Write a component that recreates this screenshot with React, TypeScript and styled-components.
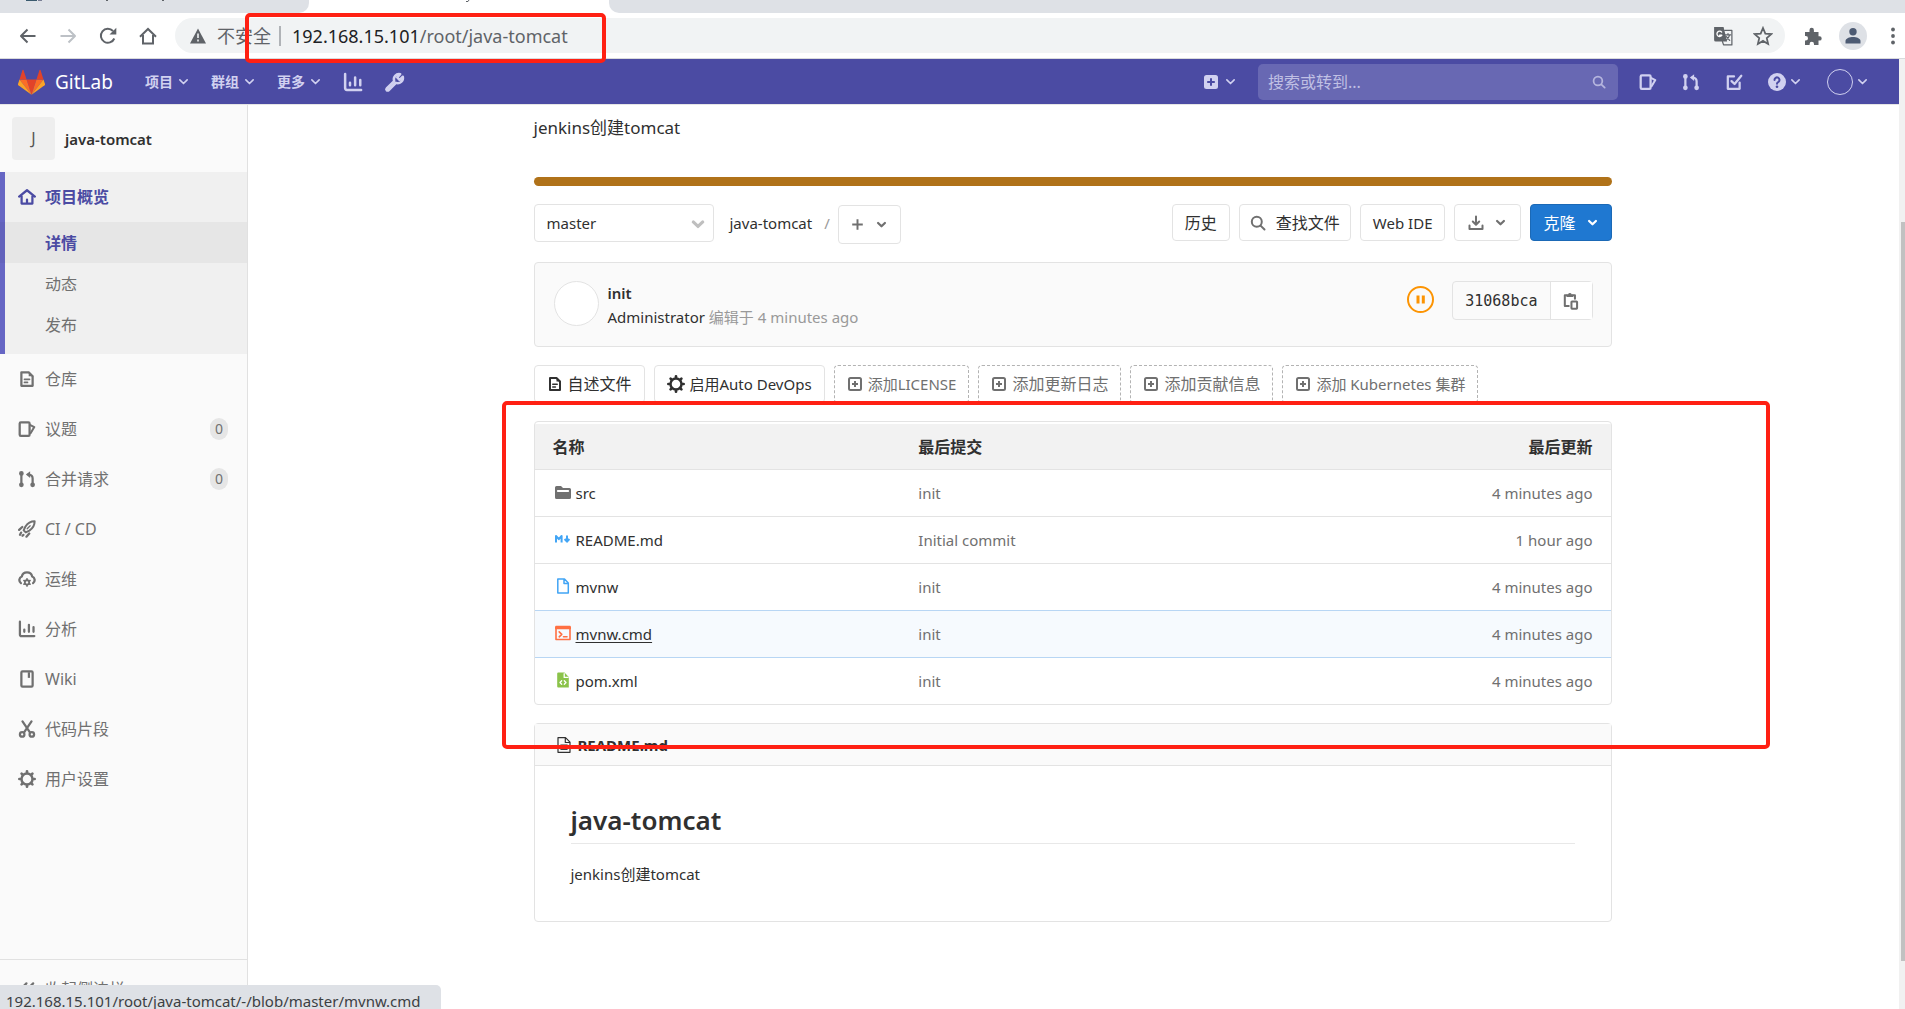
import React from "react";
import styled, { createGlobalStyle, css } from "styled-components";

const Global = createGlobalStyle`
  *, *::before, *::after { box-sizing: border-box; }
  body {
    margin: 0;
    background: #fff;
    color: #303030;
    font-family: "Noto Sans", "Noto Sans CJK SC", sans-serif;
    font-size: 15px;
    line-height: 24px;
  }
  a { color: inherit; text-decoration: none; }
  button, input, select { font: inherit; color: inherit; margin: 0; }
  button { cursor: pointer; }
  h1, p, ul { margin: 0; padding: 0; }
  ul { list-style: none; }
`;

/* ---------- icons ---------- */

const Svg = styled.svg`
  flex: none;
  display: block;
  fill: none;
  stroke: currentColor;
  stroke-width: 2;
  stroke-linecap: round;
  stroke-linejoin: round;
`;

const shapes: Record<string, React.ReactNode> = {
  home: <path d="M1 7.600 8 2l7 5.600M3.200 7v6.800h9.600V7M8 13.500V10.300" />,
  doc: (
    <>
      <path d="M3 2h6.500L13 5.500V14H3z" />
      <path d="M9.500 1.500v4H14z" fill="currentColor" stroke="none" />
      <path d="M5.800 8.300h4.400M5.800 11h2.600" strokeWidth="1.600" />
    </>
  ),
  issues: (
    <>
      <rect x="1.500" y="2" width="8.800" height="12" rx="1" />
      <path d="M11 4.500 14.500 6.300 11.300 11.600" strokeWidth="1.800" />
    </>
  ),
  merge: (
    <>
      <path d="M3 3.500v9.500M13 13V7.500Q13 4.500 9.500 4" />
      <path d="M10.800 1v6L7 4z" fill="currentColor" stroke="none" />
      <circle cx="3" cy="3" r="1.100" fill="currentColor" />
      <circle cx="3" cy="13.200" r="1.100" fill="currentColor" />
      <circle cx="13" cy="13.200" r="1.100" fill="currentColor" />
    </>
  ),
  rocket: (
    <>
      <path d="M14.800 1.200c-3.500 0-6.200 1.600-8.300 4.800L5 9.200 6.900 11l3.200-1.500c3.200-2.100 4.700-4.800 4.700-8.300z" strokeWidth="1.800" />
      <path d="M10.800 5.200 8.200 7.800" strokeWidth="1.200" />
      <path d="M3.800 6.200 1 8.800M10 12 7.500 14.800M2.800 11.200l-1 2M4.800 13.200l-.8.800" />
    </>
  ),
  cloud: (
    <>
      <path d="M2.600 11.600A3.300 3.300 0 0 1 3.400 5.800a4.700 4.700 0 0 1 9.200 0 3.300 3.300 0 0 1 .8 5.800" />
      <circle cx="8" cy="11" r="1.900" strokeWidth="1.600" />
      <path d="M8 7.800v.800M8 13.400v.800M5.300 9.400l.6.400M10.100 12.200l.6.400M5.300 12.600l.6-.4M10.100 9.800l.6-.4" strokeWidth="1.500" />
    </>
  ),
  chart: (
    <path d="M1.700 1.500v11.300q0 1.500 1.500 1.500H14.500M5.600 8.500v2M9.700 4.300v6.200M13.800 6.300v4.200" />
  ),
  book: (
    <>
      <rect x="3" y="1.200" width="10" height="13.600" rx="1" />
      <path d="M9.700 2v5" strokeLinecap="butt" />
    </>
  ),
  scissors: (
    <>
      <path d="M4 1.200 10.600 11M12 1.200 5.400 11" />
      <circle cx="3.700" cy="12.800" r="2" />
      <circle cx="12.300" cy="12.800" r="2" />
    </>
  ),
  gear: (
    <>
      <circle cx="8" cy="8" r="4.900" strokeWidth="2.200" />
      <path d="M8 1.200v1.300M8 13.500v1.300M1.200 8h1.300M13.500 8h1.300M3.200 3.200l.8.800M12 12l.8.800M3.200 12.800l.8-.8M12 4l.8-.8" strokeWidth="2.400" />
    </>
  ),
  collapse: <path d="M7.500 3 2.500 8l5 5M13.500 3l-5 5 5 5" />,
  wrench: (
    <path
      d="M13.700 4.200 11.300 6.400 9.600 4.700 11.800 2.300A3.800 3.800 0 0 0 7.400 7.300L2 12.700a.9.9 0 0 0 1.300 1.300L8.700 8.600A3.800 3.800 0 0 0 13.700 4.200z"
      strokeWidth="1.800"
    />
  ),
  chevron: <path d="M3.500 6 8 10.500 12.500 6" />,
  caret: <path d="M3.800 6.200 8 10.200 12.200 6.200" strokeWidth="2.800" />,
  plus: <path d="M8 1.500v13M1.500 8h13" strokeWidth="2.400" strokeLinecap="butt" />,
  plusBox: (
    <>
      <rect x="2" y="2" width="12" height="12" rx="1.500" />
      <path d="M8 5v6M5 8h6" strokeLinecap="butt" />
    </>
  ),
  plusSolid: (
    <>
      <rect x="1" y="1" width="14" height="14" rx="2.500" fill="currentColor" stroke="none" />
      <path d="M8 4.200v7.600M4.200 8h7.600" stroke="#4b4ba3" strokeLinecap="butt" />
    </>
  ),
  search: (
    <>
      <circle cx="6.800" cy="6.800" r="5" />
      <path d="M10.600 10.600 14.500 14.500" />
    </>
  ),
  todo: (
    <>
      <path d="M13 8.500V14H2.500V3H8" />
      <path d="M5.800 7.200 8.500 9.800 14.500 2.500" />
    </>
  ),
  help: (
    <>
      <circle cx="8" cy="8" r="8" fill="currentColor" stroke="none" />
      <path d="M5.800 6.200a2.200 2.200 0 1 1 3.500 1.700Q8 8.600 8 9.500" stroke="#4b4ba3" strokeWidth="1.800" />
      <circle cx="8" cy="12.200" r="1.200" fill="#4b4ba3" stroke="none" />
    </>
  ),
  download: <path d="M8 1.500v8M4.800 6.500 8 9.700l3.200-3.200M1.500 10.500V14h13v-3.500" />,
  paste: (
    <>
      <path d="M6 12.500H2.500V2.800H4M10 2.800h1.500V6" strokeWidth="1.800" />
      <path d="M4 4.500V2h1.400a1.700 1.700 0 0 1 3.200 0H10v2.500z" fill="currentColor" stroke="none" />
      <rect x="8.400" y="8.400" width="5" height="6.400" rx=".5" strokeWidth="1.800" />
    </>
  ),
  folder: (
    <>
      <path d="M0 3.500A1.500 1.500 0 0 1 1.500 2H6l2 2h6.500A1.500 1.500 0 0 1 16 5.500v8a1.500 1.500 0 0 1-1.500 1.500h-13A1.500 1.500 0 0 1 0 13.500z" fill="currentColor" stroke="none" />
      <path d="M2.800 7h10.400" stroke="#fff" strokeWidth="1.800" />
    </>
  ),
  markdown: (
    <>
      <path d="M1 11.500V5l2.800 3.200L6.600 5v6.500" strokeWidth="2" strokeLinecap="butt" />
      <path d="M12 4.500v5M9.600 8l2.400 2.700L14.400 8" strokeLinecap="butt" />
    </>
  ),
  file: <path d="M2.800 1h6.700l3.800 3.900V15H2.800zM9 1v4.500h4.300" strokeWidth="1.500" />,
  terminal: (
    <>
      <rect x="1" y="1.500" width="14" height="13" strokeWidth="1.600" />
      <path d="M1 3h14" strokeWidth="2.400" />
      <path d="M4.200 6.800 6.800 9.300 4.200 11.800M8.500 11.800h3.500" strokeWidth="1.600" />
    </>
  ),
  xml: (
    <>
      <path d="M3.200.5h6.300L13.800 5v10.500H3.200A1 1 0 0 1 2.200 14.500v-13a1 1 0 0 1 1-1z" fill="currentColor" stroke="none" />
      <path d="M9.200 1.700V5.400h3.800" stroke="#fff" strokeWidth="1.300" />
      <path d="M6.700 8.700 5 10.500l1.700 1.800M9.300 8.700 11 10.500l-1.700 1.800" stroke="#fff" strokeWidth="1.300" />
    </>
  ),
  textFile: (
    <>
      <path d="M2 .7h7.500L14 5.200v10.100H2zM9.300.7v4.800H14" strokeWidth="1.200" />
      <path d="M4.800 8h6.400M4.800 10.200h6.400M4.800 12.400h6.400" strokeWidth="1" />
    </>
  ),
};

const Icon = ({ name, size = 16 }: { name: string; size?: number }) => (
  <Svg viewBox="0 0 16 16" width={size} height={size} aria-hidden="true">
    {shapes[name]}
  </Svg>
);

/* ---------- browser chrome ---------- */

const Page = styled.div`
  height: 100vh;
  overflow: hidden;
  display: flex;
  flex-direction: column;
  position: relative;
`;

const Browser = styled.header`
  flex: none;
  position: relative;
  border-bottom: 1px solid #d9dadc;
`;

const TabStrip = styled.div`
  display: flex;
  height: 13px;
  background: #fff;
`;

const Tab = styled.div<{ $width?: number; $active?: boolean; $side?: "left" | "right" }>`
  ${(p) => (p.$width ? `width: ${p.$width}px;` : "flex: 1;")}
  padding-left: 26px;
  background: ${(p) => (p.$active ? "#fff" : "#dee1e6")};
  border-bottom-right-radius: ${(p) => (p.$side === "left" ? 10 : 0)}px;
  border-bottom-left-radius: ${(p) => (p.$side === "right" ? 10 : 0)}px;
  svg { display: block; }
`;

const Toolbar = styled.div`
  display: flex;
  align-items: center;
  height: 45px;
  padding: 0 3px 0 18px;
  color: #5f6368;
`;

const ChromeButton = styled.button<{ $dim?: boolean }>`
  display: flex;
  justify-content: center;
  width: 20px;
  margin-right: 20px;
  padding: 0;
  border: 0;
  background: none;
  color: ${(p) => (p.$dim ? "#bdc1c6" : "#5f6368")};
`;

const Address = styled.div`
  flex: 1;
  display: flex;
  align-items: center;
  height: 35px;
  margin-left: -3px;
  padding: 0 12px 0 14px;
  border-radius: 18px;
  background: #f1f3f4;
  font-size: 18px;
`;

const Insecure = styled.span`
  padding: 0 8px 0 10px;
  border-right: 2px solid #b0b3b7;
  line-height: 20px;
`;

const Url = styled.span`
  flex: 1;
  padding-left: 11px;
  b { font-weight: 400; color: #202124; }
`;

const AddressTools = styled.div`
  display: flex;
  gap: 20px;
`;

const ChromeTools = styled.div`
  display: flex;
  align-items: center;
  gap: 17px;
  padding-left: 19px;
`;

const Profile = styled.div`
  display: flex;
  justify-content: center;
  align-items: center;
  width: 28px;
  height: 28px;
  border-radius: 50%;
  background: #dee1e6;
`;

const Highlight = styled.div`
  position: absolute;
  border: 4px solid #ff2013;
  border-radius: 5px;
  pointer-events: none;
`;

const UrlHighlight = styled(Highlight)`
  left: 245px;
  top: 13px;
  width: 361px;
  height: 50px;
  z-index: 2;
`;

const FilesHighlight = styled(Highlight)`
  left: -32px;
  right: -158px;
  top: -20px;
  bottom: -44px;
`;

const ChromeGlyph = ({ children, size = 18 }: { children: React.ReactNode; size?: number }) => (
  <Svg viewBox="0 0 18 18" width={size} height={size} aria-hidden="true">
    {children}
  </Svg>
);

const BrowserChrome = () => (
  <Browser>
    <TabStrip>
      <Tab $width={309} $side="left">
        <svg width="145" height="2" aria-hidden="true">
          <path d="M0 0h11v1H0z" fill="#3a5a6e" />
          <path d="M12 0h4v1h-4z" fill="#7a7f95" />
          <path d="M80 0h2v1h-2zM136 0h2v1h-2z" fill="#5f6368" />
        </svg>
      </Tab>
      <Tab $width={300} $active>
        <svg width="140" height="3" aria-hidden="true">
          <path d="M131 1.500h2l1-1.500" stroke="#5f6368" fill="none" />
        </svg>
      </Tab>
      <Tab $side="right" />
    </TabStrip>
    <Toolbar>
      <ChromeButton aria-label="后退">
        <ChromeGlyph><path d="M16.500 9H2M8.500 2.500 2 9l6.500 6.500" strokeLinecap="butt" /></ChromeGlyph>
      </ChromeButton>
      <ChromeButton $dim aria-label="前进">
        <ChromeGlyph><path d="M1.500 9H16M9.500 2.500 16 9l-6.500 6.500" strokeLinecap="butt" /></ChromeGlyph>
      </ChromeButton>
      <ChromeButton aria-label="重新加载">
        <ChromeGlyph>
          <path d="M15.300 11.500A7 7 0 1 1 14 4" strokeLinecap="butt" />
          <path d="M17.300.8v6.800h-6.800z" fill="currentColor" stroke="none" />
        </ChromeGlyph>
      </ChromeButton>
      <ChromeButton aria-label="主页">
        <ChromeGlyph><path d="M1 9.800 9 2l8 7.800M4 8v8.500h10V8" strokeLinecap="butt" strokeLinejoin="miter" /></ChromeGlyph>
      </ChromeButton>
      <Address>
        <ChromeGlyph>
          <path d="M9 1.500 17 16.500H1z" fill="currentColor" stroke="none" />
          <path d="M9 6.500v4.500M9 12.500v2" stroke="#f1f3f4" strokeWidth="1.600" strokeLinecap="butt" />
        </ChromeGlyph>
        <Insecure>不安全</Insecure>
        <Url><b>192.168.15.101</b>/root/java-tomcat</Url>
        <AddressTools>
          <ChromeGlyph size={20}>
            <path d="M1 1h8.500l3.200 13H2.500A1.500 1.500 0 0 1 1 12.500z" fill="currentColor" stroke="none" />
            <path d="M10.500 4H17v13H9.500l-1-3" strokeWidth="1.100" />
            <path d="M7.800 5.500A2.400 2.400 0 1 0 8 8.300H6" stroke="#fff" strokeWidth="1.200" />
            <path d="M11 8h5M13.500 6.800V8M15 8q-.8 3-3 4.500M12 9.500l3 3.500" strokeWidth="1.100" />
          </ChromeGlyph>
          <ChromeGlyph size={20}>
            <path d="m9 1.800 2.100 5 5.400.500-4.100 3.600 1.200 5.300L9 13.400l-4.600 2.800 1.200-5.300L1.500 7.300l5.400-.5z" strokeWidth="1.600" strokeLinejoin="miter" />
          </ChromeGlyph>
        </AddressTools>
      </Address>
      <ChromeTools>
        <ChromeGlyph>
          <path d="M1 5h4.500V3a2.200 2.200 0 0 1 4.400 0v2h4.600v4.200h1a2.200 2.200 0 0 1 0 4.400h-1V18H10v-1a2.200 2.200 0 0 0-4.400 0v1H1v-4.500h.8a2.200 2.200 0 0 0 0-4.400H1z" fill="currentColor" stroke="none" />
        </ChromeGlyph>
        <Profile>
          <ChromeGlyph>
            <circle cx="9" cy="4.800" r="3.700" fill="#4d5b73" stroke="none" />
            <path d="M1.500 16.500V14c0-2.500 4-4 7.500-4s7.500 1.500 7.500 4v2.500z" fill="#4d5b73" stroke="none" />
          </ChromeGlyph>
        </Profile>
        <ChromeGlyph>
          <g fill="currentColor" stroke="none">
            <circle cx="9" cy="2.500" r="1.900" /><circle cx="9" cy="9" r="1.900" /><circle cx="9" cy="15.500" r="1.900" />
          </g>
        </ChromeGlyph>
      </ChromeTools>
    </Toolbar>
    <UrlHighlight />
  </Browser>
);

/* ---------- navigation bar ---------- */

const Viewport = styled.div`
  flex: 1;
  min-height: 0;
  display: flex;
`;

const Site = styled.div`
  flex: 1;
  min-width: 0;
  display: flex;
  flex-direction: column;
`;

const Scrollbar = styled.div`
  width: 6px;
  padding: 163px 0 48px 2px;
  background: #f1f1f1;
`;

const Thumb = styled.div`
  height: 100%;
  background: #c1c1c1;
`;

const Nav = styled.nav`
  flex: none;
  display: flex;
  align-items: center;
  height: 45px;
  padding: 0 30px 0 18px;
  background: #4b4ba3;
  color: #d1d1f0;
`;

const Brand = styled.a`
  display: flex;
  align-items: center;
  gap: 10px;
  margin-right: 32px;
  color: #fff;
  font-size: 19px;
`;

const NavLinks = styled.div`
  display: flex;
  align-items: center;
  gap: 21px;
`;

const NavButton = styled.button<{ $gap?: number }>`
  display: flex;
  align-items: center;
  gap: ${(p) => p.$gap ?? 5}px;
  padding: 0;
  border: 0;
  background: none;
  font-size: 14px;
  font-weight: 600;
`;

const NavRight = styled(NavLinks)`
  gap: 25px;
  margin-left: auto;
`;

const SearchBox = styled.label`
  display: flex;
  align-items: center;
  width: 360px;
  height: 36px;
  padding: 0 12px 0 10px;
  margin: 0 -4px 0 -4px;
  border-radius: 5px;
  background: #6868b3;
  color: #b5b5de;
`;

const SearchInput = styled.input`
  flex: 1;
  min-width: 0;
  padding: 0;
  border: 0;
  outline: 0;
  background: none;
  font-size: 16px;
  &::placeholder { color: #c0c0e4; opacity: 1; }
`;

const Avatar = styled.span`
  width: 26px;
  height: 26px;
  border: 1px solid #d1d1f0;
  border-radius: 50%;
`;

const Tanuki = () => (
  <svg width="27" height="26" viewBox="0 0 36 34" aria-hidden="true">
    <path d="M18 34 24.600 13.500H11.400z" fill="#e24329" />
    <path d="M18 34 11.400 13.500H2z" fill="#fc6d26" />
    <path d="M2 13.500 0 19.700a1.400 1.400 0 0 0 .5 1.500L18 34z" fill="#fca326" />
    <path d="M2 13.500h9.400L7.300 1a.7.700 0 0 0-1.300 0z" fill="#e24329" />
    <path d="M18 34l6.600-20.500H34z" fill="#fc6d26" />
    <path d="M34 13.500 36 19.700a1.400 1.400 0 0 1-.5 1.500L18 34z" fill="#fca326" />
    <path d="M34 13.500h-9.400L28.700 1a.7.700 0 0 1 1.300 0z" fill="#e24329" />
  </svg>
);

const TopNav = () => (
  <Nav>
    <Brand href="#"><Tanuki />GitLab</Brand>
    <NavLinks>
      {["项目", "群组", "更多"].map((t) => (
        <NavButton key={t} $gap={4}>{t}<Icon name="chevron" size={13} /></NavButton>
      ))}
      <NavButton aria-label="统计"><Icon name="chart" size={20} /></NavButton>
      <NavButton aria-label="管理中心"><Icon name="wrench" size={22} /></NavButton>
    </NavLinks>
    <NavRight>
      <NavButton aria-label="新建"><Icon name="plusSolid" /><Icon name="chevron" size={13} /></NavButton>
      <SearchBox>
        <SearchInput type="text" placeholder="搜索或转到..." aria-label="搜索或转到" />
        <Icon name="search" size={14} />
      </SearchBox>
      <NavButton aria-label="议题"><Icon name="issues" size={18} /></NavButton>
      <NavButton aria-label="合并请求"><Icon name="merge" size={18} /></NavButton>
      <NavButton aria-label="待办事项"><Icon name="todo" size={18} /></NavButton>
      <NavButton aria-label="帮助" $gap={3}><Icon name="help" size={18} /><Icon name="chevron" size={13} /></NavButton>
      <NavButton aria-label="用户" $gap={3}><Avatar /><Icon name="chevron" size={13} /></NavButton>
    </NavRight>
  </Nav>
);

/* ---------- sidebar ---------- */

const Content = styled.div`
  flex: 1;
  min-height: 0;
  display: flex;
  border-top: 1px solid #e5e5e5;
`;

const Side = styled.aside`
  flex: none;
  display: flex;
  flex-direction: column;
  width: 248px;
  border-right: 1px solid #e1e1e1;
  background: #fafafa;
  color: #707070;
  font-size: 16px;
`;

const Project = styled.a`
  display: flex;
  align-items: center;
  gap: 10px;
  height: 67px;
  padding: 0 12px;
  color: #303030;
  font-size: 15px;
  font-weight: 600;
`;

const Letter = styled.span`
  width: 43px;
  height: 43px;
  border-radius: 4px;
  background: #eee;
  color: #555;
  font-size: 16px;
  font-weight: 400;
  line-height: 43px;
  text-align: center;
`;

const ActiveGroup = styled.li`
  padding-bottom: 9px;
  background: #f0f0f0;
  box-shadow: inset 5px 0 #6666c4;
`;

const SideLink = styled.a<{ $active?: boolean }>`
  display: flex;
  align-items: center;
  gap: 9px;
  height: 50px;
  padding: 0 19px 0 18px;
  ${(p) => p.$active && css`color: #4b4ba3; font-weight: 600;`}
`;

const SubLink = styled.a<{ $active?: boolean }>`
  display: block;
  height: 41px;
  padding-left: 45px;
  line-height: 42px;
  ${(p) => p.$active && css`background: rgba(0, 0, 0, 0.04); color: #4b4ba3; font-weight: 600;`}
`;

const Count = styled.span`
  min-width: 18px;
  height: 22px;
  margin-left: auto;
  border-radius: 11px;
  background: #e6e6e6;
  font-size: 14px;
  line-height: 22px;
  text-align: center;
`;

const Collapse = styled.button`
  display: flex;
  align-items: center;
  gap: 9px;
  height: 50px;
  margin-top: auto;
  padding: 8px 18px 0;
  border: 0;
  border-top: 1px solid #e1e1e1;
  background: none;
`;

const items = [
  { icon: "doc", label: "仓库" },
  { icon: "issues", label: "议题", count: 0 },
  { icon: "merge", label: "合并请求", count: 0 },
  { icon: "rocket", label: "CI / CD" },
  { icon: "cloud", label: "运维" },
  { icon: "chart", label: "分析" },
  { icon: "book", label: "Wiki" },
  { icon: "scissors", label: "代码片段" },
  { icon: "gear", label: "用户设置" },
];

const Latin = styled.span`
  font-size: 15px;
`;

const Sidebar = () => (
  <Side>
    <Project href="#"><Letter>J</Letter>java-tomcat</Project>
    <ul>
      <ActiveGroup>
        <SideLink href="#" $active><Icon name="home" size={18} />项目概览</SideLink>
        <SubLink href="#" $active>详情</SubLink>
        <SubLink href="#">动态</SubLink>
        <SubLink href="#">发布</SubLink>
      </ActiveGroup>
      {items.map((i) => (
        <li key={i.label}>
          <SideLink href="#">
            <Icon name={i.icon} size={18} />
            {i.label}
            {i.count !== undefined && <Count>{i.count}</Count>}
          </SideLink>
        </li>
      ))}
    </ul>
    <Collapse><Icon name="collapse" size={18} />收起侧边栏</Collapse>
  </Side>
);

/* ---------- project page ---------- */

const Main = styled.main`
  flex: 1;
  min-width: 0;
  padding: 11px 22px 0 20px;
`;

const Column = styled.div`
  display: flex;
  flex-direction: column;
  max-width: 1078px;
  margin: 0 auto;
`;

const Description = styled.p`
  font-size: 17px;
`;

const LanguageBar = styled.div`
  height: 9px;
  margin: 37px 0 18px;
  border-radius: 5px;
  background: #b07219;
`;

const Row = styled.div<{ $gap: number }>`
  display: flex;
  align-items: flex-start;
  gap: ${(p) => p.$gap}px;
`;

const Push = styled(Row)`
  margin-left: auto;
`;

const BranchPicker = styled.div`
  position: relative;
  width: 180px;
  color: #bfbfbf;
  svg { position: absolute; right: 7px; top: 11px; pointer-events: none; }
`;

const BranchSelect = styled.select`
  appearance: none;
  width: 100%;
  height: 38px;
  padding: 0 12px;
  border: 1px solid #e3e3e3;
  border-radius: 4px;
  background: #fff;
  color: #303030;
`;

const Crumbs = styled.div`
  display: flex;
  gap: 12px;
  margin: 0 8px 0 16px;
  line-height: 39px;
  color: #999;
  a { color: #303030; }
`;

const Button = styled.button<{ $primary?: boolean; $pad?: number }>`
  display: flex;
  align-items: center;
  gap: 10px;
  height: 37px;
  padding: 0 ${(p) => p.$pad ?? 12}px;
  border: 1px solid ${(p) => (p.$primary ? "#1b69b6" : "#e3e3e3")};
  border-radius: 4px;
  background: ${(p) => (p.$primary ? "#1f78d1" : "#fff")};
  color: ${(p) => (p.$primary ? "#fff" : "#303030")};
  font-size: 16px;
  svg { color: ${(p) => (p.$primary ? "#fff" : "#707070")}; }
`;

const AddButton = styled(Button)`
  gap: 11px;
  height: 39px;
  margin-top: 1px;
`;

const Commit = styled.section`
  display: flex;
  align-items: flex-start;
  height: 85px;
  margin: 18px 0;
  padding: 18px 18px 0 19px;
  border: 1px solid #e3e3e3;
  border-radius: 4px;
  background: #fafafa;
`;

const Face = styled.div`
  width: 45px;
  height: 45px;
  margin-right: 9px;
  border: 1px solid #e3e3e3;
  border-radius: 50%;
  background: #fff;
`;

const CommitText = styled.div`
  color: #999;
  a { color: #303030; }
  b { font-weight: 600; color: #303030; }
`;

const Sha = styled.div`
  display: flex;
  height: 39px;
  border: 1px solid #e3e3e3;
  border-radius: 4px;
  span {
    padding: 0 12px;
    font-family: "DejaVu Sans Mono", monospace;
    font-size: 15px;
    line-height: 38px;
  }
`;

const CopyButton = styled.button`
  display: flex;
  align-items: center;
  justify-content: center;
  width: 42px;
  padding: 0;
  border: 0;
  border-left: 1px solid #e3e3e3;
  background: #fff;
  color: #707070;
`;

const Shortcut = styled.a<{ $dashed?: boolean }>`
  display: flex;
  align-items: center;
  gap: 5px;
  height: 38px;
  padding: 0 12px;
  border: 1px solid #e3e3e3;
  border-radius: 4px;
  ${(p) => p.$dashed && css`border: 1px dashed #b3b3b3; color: #707070;`}
`;

const Cjk = styled.span`
  font-size: 16px;
`;

const FilesArea = styled.div`
  position: relative;
  margin: 18px 0;
`;

const FilesFrame = styled.div`
  padding-top: 2px;
  border: 1px solid #e3e3e3;
  border-radius: 4px;
`;

const Files = styled.table`
  width: 100%;
  table-layout: fixed;
  border-spacing: 0;
  th, td { padding: 0 18px; text-align: left; }
  th { height: 45px; background: #f2f2f2; font-size: 16px; font-weight: 600; }
  td { height: 47px; border-top: 1px solid #e3e3e3; color: #707070; }
  th:first-child, td:first-child { width: 34%; }
  th:last-child, td:last-child { width: 20%; text-align: right; }
`;

const FileRow = styled.tr<{ $hover?: boolean }>`
  ${(p) =>
    p.$hover &&
    css`
      td { background: #f6fafe; border-color: #b8d6f4; }
      & + tr td { border-color: #b8d6f4; }
      a { text-decoration: underline; text-underline-offset: 2px; }
    `}
`;

const FileName = styled.span<{ $tint: string }>`
  display: flex;
  align-items: center;
  gap: 5px;
  padding-left: 2px;
  svg { color: ${(p) => p.$tint}; margin-bottom: 3px; }
  a { color: #303030; }
`;

const Readme = styled.article`
  border: 1px solid #e3e3e3;
  border-radius: 4px;
`;

const ReadmeHead = styled.header`
  display: flex;
  align-items: center;
  gap: 6px;
  height: 42px;
  padding: 0 21px;
  border-bottom: 1px solid #e3e3e3;
  background: #fafafa;
  font-weight: 700;
`;

const ReadmeBody = styled.div`
  padding: 36px 36px 35px;
  h1 {
    margin-bottom: 18px;
    padding-bottom: 5px;
    border-bottom: 1px solid #e8e8e8;
    font-size: 26px;
    font-weight: 600;
    line-height: 36px;
  }
`;

const files = [
  { icon: "folder", tint: "#707070", name: "src", commit: "init", when: "4 minutes ago" },
  { icon: "markdown", tint: "#42a5f5", name: "README.md", commit: "Initial commit", when: "1 hour ago" },
  { icon: "file", tint: "#42a5f5", name: "mvnw", commit: "init", when: "4 minutes ago" },
  { icon: "terminal", tint: "#ff7043", name: "mvnw.cmd", commit: "init", when: "4 minutes ago", hover: true },
  { icon: "xml", tint: "#8bc34a", name: "pom.xml", commit: "init", when: "4 minutes ago" },
];

const Pipeline = styled.a`
  display: block;
  margin: 5px 18px 0 0;
`;

const ProjectPage = () => (
  <Main>
    <Column>
      <Description>jenkins创建tomcat</Description>
      <LanguageBar />
      <Row $gap={0}>
        <BranchPicker>
          <BranchSelect aria-label="分支" defaultValue="master"><option>master</option></BranchSelect>
          <Icon name="caret" size={18} />
        </BranchPicker>
        <Crumbs><a href="#">java-tomcat</a>/</Crumbs>
        <AddButton aria-label="添加"><Icon name="plus" size={13} /><Icon name="caret" size={13} /></AddButton>
        <Push $gap={9}>
          <Button>历史</Button>
          <Button $pad={10}><Icon name="search" />查找文件</Button>
          <Button><Latin>Web IDE</Latin></Button>
          <Button $pad={13} aria-label="下载"><Icon name="download" /><Icon name="caret" size={13} /></Button>
          <Button $primary>克隆<Icon name="caret" size={13} /></Button>
        </Push>
      </Row>
      <Commit>
        <Face />
        <CommitText>
          <div><b>init</b></div>
          <div><a href="#">Administrator</a> 编辑于 4 minutes ago</div>
        </CommitText>
        <Push $gap={0}>
          <Pipeline href="#" aria-label="流水线等待中">
            <svg width="27" height="27" viewBox="0 0 27 27" aria-hidden="true">
              <circle cx="13.500" cy="13.500" r="12.500" fill="none" stroke="#fc9403" strokeWidth="2" />
              <path d="M9.500 9.500h3v8h-3zM14.800 9.500h3v8h-3z" fill="#fc9403" />
            </svg>
          </Pipeline>
          <Sha>
            <span>31068bca</span>
            <CopyButton aria-label="复制提交 SHA"><Icon name="paste" size={18} /></CopyButton>
          </Sha>
        </Push>
      </Commit>
      <Row $gap={9}>
        <Shortcut href="#"><Icon name="doc" /><Cjk>自述文件</Cjk></Shortcut>
        <Shortcut href="#"><Icon name="gear" size={18} /><span>启用Auto DevOps</span></Shortcut>
        <Shortcut href="#" $dashed><Icon name="plusBox" /><span>添加LICENSE</span></Shortcut>
        <Shortcut href="#" $dashed><Icon name="plusBox" /><Cjk>添加更新日志</Cjk></Shortcut>
        <Shortcut href="#" $dashed><Icon name="plusBox" /><Cjk>添加贡献信息</Cjk></Shortcut>
        <Shortcut href="#" $dashed><Icon name="plusBox" /><span>添加 Kubernetes 集群</span></Shortcut>
      </Row>
      <FilesArea>
        <FilesFrame>
          <Files>
            <thead>
              <tr><th>名称</th><th>最后提交</th><th>最后更新</th></tr>
            </thead>
            <tbody>
              {files.map((f) => (
                <FileRow key={f.name} $hover={f.hover}>
                  <td><FileName $tint={f.tint}><Icon name={f.icon} /><a href="#">{f.name}</a></FileName></td>
                  <td>{f.commit}</td>
                  <td>{f.when}</td>
                </FileRow>
              ))}
            </tbody>
          </Files>
        </FilesFrame>
        <FilesHighlight />
      </FilesArea>
      <Readme>
        <ReadmeHead><Icon name="textFile" />README.md</ReadmeHead>
        <ReadmeBody>
          <h1>java-tomcat</h1>
          <p>jenkins创建tomcat</p>
        </ReadmeBody>
      </Readme>
    </Column>
  </Main>
);

const StatusBar = styled.div`
  position: absolute;
  left: 0;
  bottom: 0;
  height: 24px;
  padding: 4px 20px 0 6px;
  border-top-right-radius: 5px;
  background: #dee1e6;
  color: #3c4043;
  white-space: nowrap;
`;

export default function App() {
  return (
    <Page>
      <Global />
      <BrowserChrome />
      <Viewport>
        <Site>
          <TopNav />
          <Content>
            <Sidebar />
            <ProjectPage />
          </Content>
        </Site>
        <Scrollbar><Thumb /></Scrollbar>
      </Viewport>
      <StatusBar>192.168.15.101/root/java-tomcat/-/blob/master/mvnw.cmd</StatusBar>
    </Page>
  );
}
